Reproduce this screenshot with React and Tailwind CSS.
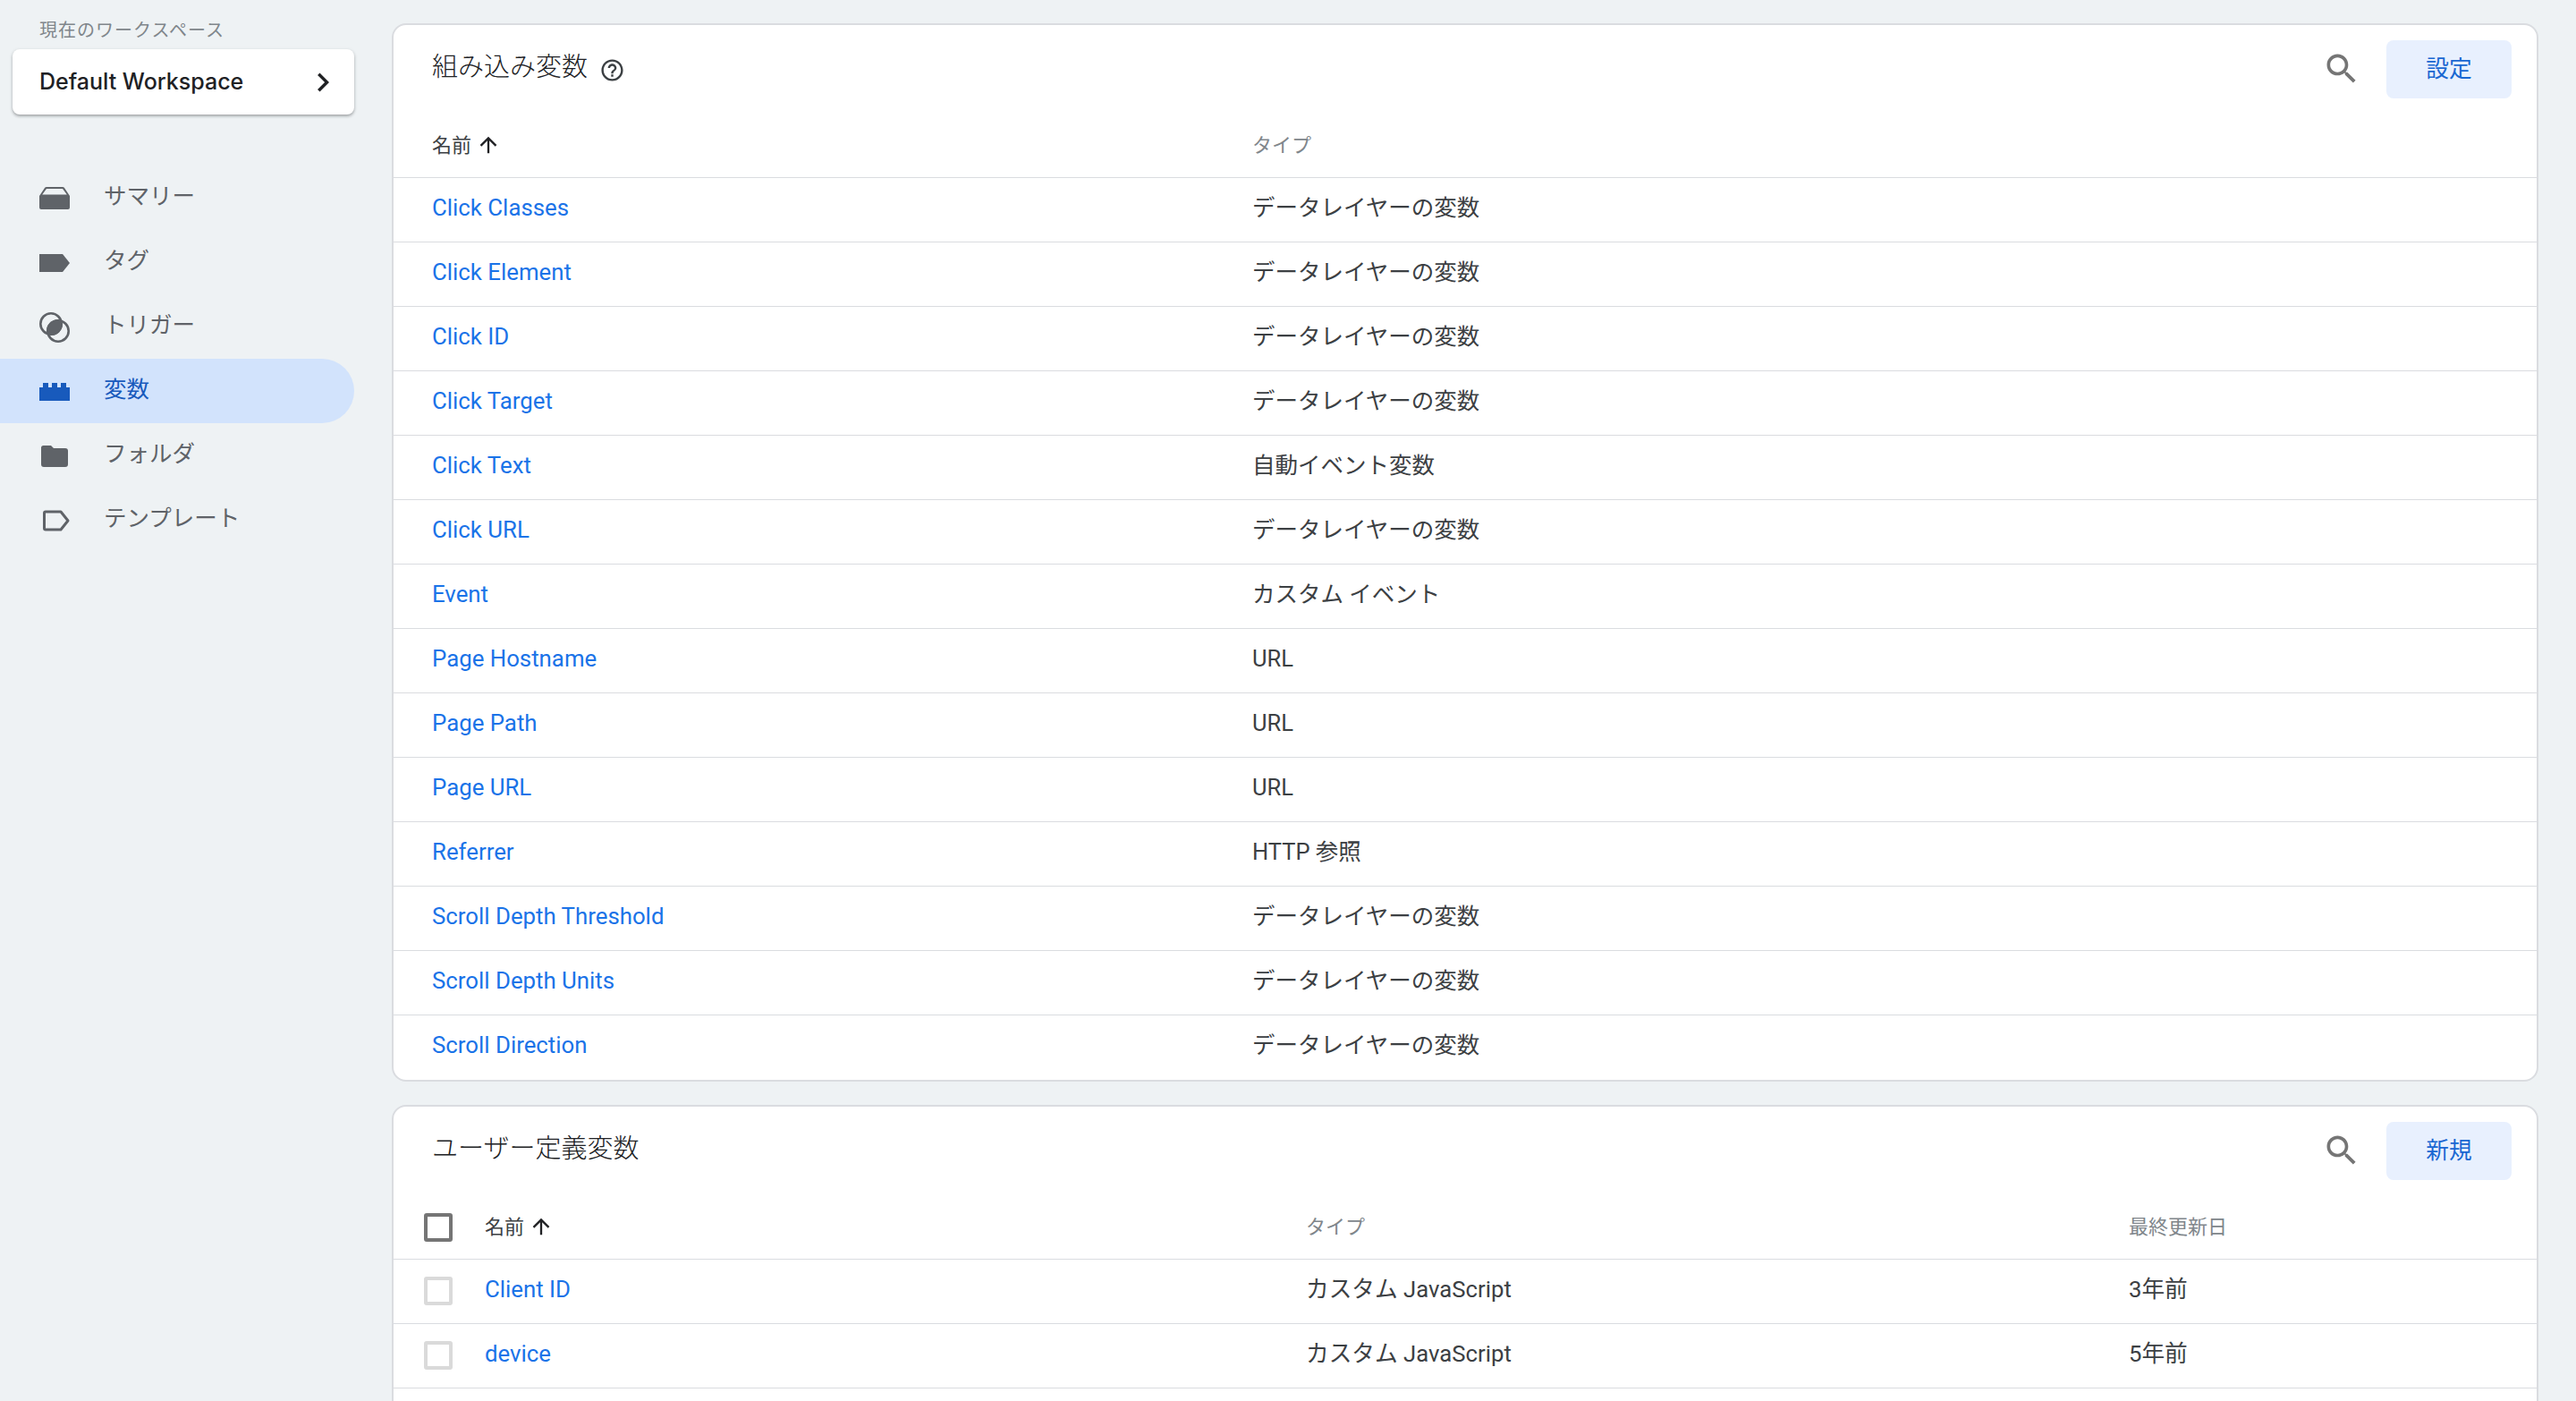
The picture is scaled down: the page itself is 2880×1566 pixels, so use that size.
const searchPath = "M15.5 14h-.79l-.28-.27C15.41 12.59 16 11.11 16 9.5 16 5.91 13.09 3 9.5 3S3 5.91 3 9.5 5.91 16 9.5 16c1.61 0 3.09-.59 4.23-1.57l.27.28v.79l5 4.99L20.49 19l-4.99-5zm-6 0C7.01 14 5 11.99 5 9.5S7.01 5 9.5 5 14 7.01 14 9.5 11.99 14 9.5 14z";
const helpPath = "M11 18h2v-2h-2v2zm1-16C6.48 2 2 6.48 2 12s4.48 10 10 10 10-4.48 10-10S17.52 2 12 2zm0 18c-4.41 0-8-3.59-8-8s3.59-8 8-8 8 3.59 8 8-3.59 8-8 8zm0-14c-2.21 0-4 1.79-4 4h2c0-1.1.9-2 2-2s2 .9 2 2c0 2-3 1.75-3 5h2c0-2.25 3-2.5 3-5 0-2.21-1.79-4-4-4z";
const arrowPath = "M4 12l1.41 1.41L11 7.83V20h2V7.83l5.58 5.59L20 12l-8-8-8 8z";
const chevronPath = "M10 6L8.59 7.41 13.17 12l-4.58 4.59L10 18l6-6z";

const DL = "データレイヤーの変数";

const builtIn = [
    ["Click Classes", DL],
    ["Click Element", DL],
    ["Click ID", DL],
    ["Click Target", DL],
    ["Click Text", "自動イベント変数"],
    ["Click URL", DL],
    ["Event", "カスタム イベント"],
    ["Page Hostname", "URL"],
    ["Page Path", "URL"],
    ["Page URL", "URL"],
    ["Referrer", "HTTP 参照"],
    ["Scroll Depth Threshold", DL],
    ["Scroll Depth Units", DL],
    ["Scroll Direction", DL],
];

const userDefined = [
    ["Client ID", "カスタム JavaScript", "3年前"],
    ["device", "カスタム JavaScript", "5年前"],
];

// nav icons are drawn on a 34x34 box, same as the originals
const SummaryIcon = () => (
    <svg width="34" height="34" viewBox="0 0 34 34" fill="#5f6368">
        <path d="M0 14 L6 5 Q6.6 4 8 4 H26 Q27.4 4 28 5 L34 14 V27 Q34 29 32 29 H2 Q0 29 0 27 Z M3.2 12.5 H30.8 L26 6 H8 Z" fillRule="evenodd" />
    </svg>
);
const TagIcon = () => (
    <svg width="34" height="34" viewBox="0 0 34 34" fill="#5f6368">
        <path d="M0 7 H26 L34 17 L26 27 H0 Z" />
    </svg>
);
const TriggerIcon = () => (
    <svg width="34" height="34" viewBox="0 0 34 34">
        <circle cx="13" cy="13" r="11.7" fill="none" stroke="#5f6368" strokeWidth="2.6" />
        <circle cx="21" cy="21" r="11.7" fill="none" stroke="#5f6368" strokeWidth="2.6" />
        <path d="M24.7 9.3 A11.7 11.7 0 0 1 9.3 24.7 A11.7 11.7 0 0 1 24.7 9.3 Z" fill="#5f6368" />
    </svg>
);
const VariableIcon = () => (
    <svg width="34" height="34" viewBox="0 0 34 34" fill="#185abc">
        <path d="M0 12 H4 V7 H10 V12 H14 V7 H20 V12 H24 V7 H30 V12 H34 V27 H0 Z" />
    </svg>
);
const FolderIcon = () => (
    <svg width="34" height="34" viewBox="0 0 34 34" fill="#5f6368">
        <path d="M4.5 5 H13 L16 8 H29 Q32 8 32 11 V26 Q32 29 29 29 H5 Q2 29 2 26 V7.5 Q2 5 4.5 5 Z" />
    </svg>
);
const TemplateIcon = () => (
    <svg width="34" height="34" viewBox="0 0 34 34" fill="none" stroke="#5f6368" strokeWidth="3" strokeLinejoin="round">
        <path d="M7 7 Q5.5 7 5.5 8.5 V25.5 Q5.5 27 7 27 H24 L32 17 L24 7 Z" />
    </svg>
);

const navItems = [
    { label: "サマリー", icon: <SummaryIcon /> },
    { label: "タグ", icon: <TagIcon /> },
    { label: "トリガー", icon: <TriggerIcon /> },
    { label: "変数", icon: <VariableIcon />, active: true },
    { label: "フォルダ", icon: <FolderIcon /> },
    { label: "テンプレート", icon: <TemplateIcon /> },
];

const Sidebar = () => (
    <div className="w-[438px] shrink-0 pr-[42px]">
        <div className="pl-[44px] pt-[23px] text-[20px] leading-[22px] tracking-[1px] text-[#80868b]">現在のワークスペース</div>
        <div className="mt-[10px] ml-[14px] h-[73px] flex items-center justify-between pl-[30px] pr-[14px] bg-white rounded-[8px] shadow-[0_2px_3px_rgba(60,64,67,0.35),0_1px_4px_rgba(60,64,67,0.12)]">
            <span className="text-[25px] font-medium text-[#202124] font-['Inter',sans-serif]">Default Workspace</span>
            <svg width="42" height="42" viewBox="0 0 24 24" fill="#202124"><path d={chevronPath} /></svg>
        </div>
        <div className="mt-[57px] flex flex-col">
            {navItems.map((v) => (
                <div key={v.label} className={"h-[72px] flex items-center pl-[44px] rounded-r-full " + (v.active ? "bg-[#d2e3fc] text-[#185abc]" : "text-[#5f6368]")}>
                    <span className="w-[34px] h-[34px] mt-[2px]">{v.icon}</span>
                    <span className="ml-[38px] mb-[3px] text-[25.5px]">{v.label}</span>
                </div>
            ))}
        </div>
    </div>
);

const CardHeader = ({ title, button, help }) => (
    <div className="flex items-start justify-between pl-[43px] pr-[28px] pt-[17px]">
        <div className="flex items-center h-[62px]">
            <span className="text-[29px] font-light text-[#202124]">{title}</span>
            {help && (
                <svg className="ml-[13px] mt-[5px]" width="29" height="29" viewBox="0 0 24 24" fill="#3c4043"><path d={helpPath} /></svg>
            )}
        </div>
        <div className="flex items-start">
            <svg className="mt-[10px] mr-[28px]" width="44" height="44" viewBox="0 0 24 24" fill="#757575"><path d={searchPath} /></svg>
            <button className="w-[140px] h-[65px] rounded-[8px] bg-[#e8f0fe] text-[25.7px] text-[#1967d2]">{button}</button>
        </div>
    </div>
);

const SortHead = () => (
    <span className="flex items-center text-[22px] text-[#3c4043]">
        名前
        <svg className="ml-[5px] -mt-[3px]" width="28" height="28" viewBox="0 0 24 24" fill="#202124"><path d={arrowPath} /></svg>
    </span>
);

const Cell = ({ className, children }) => (
    <div className={"leading-[32px] " + className}>{children}</div>
);

const App = () => {
    return (
        <div className="w-[2880px] h-[1566px] overflow-hidden flex bg-[#eef2f4] font-['Roboto','Noto_Sans_CJK_JP',sans-serif]">
            <Sidebar />

            <div className="w-[2400px] pt-[26px] flex flex-col gap-[26px]">
                <div className="shrink-0 bg-white border-2 border-[#dadce0] rounded-[16px] overflow-hidden">
                    <CardHeader title="組み込み変数" button="設定" help />
                    <div className="h-[18px]" />
                    <div className="h-[71px] flex items-end pb-[19px] pl-[43px] border-b border-[#dadce0] leading-[32px]">
                        <div className="w-[917px]"><SortHead /></div>
                        <div className="text-[22px] text-[#80868b]">タイプ</div>
                    </div>
                    {builtIn.map((v, i) => (
                        <div key={v[0]} className={"h-[72px] flex items-center pb-[6px] pl-[43px] " + (i < builtIn.length - 1 ? "border-b border-[#dadce0]" : "")}>
                            <Cell className="w-[917px] text-[25.8px] text-[#1a73e8]">{v[0]}</Cell>
                            <Cell className="text-[25.5px] text-[#3c4043]">{v[1]}</Cell>
                        </div>
                    ))}
                </div>

                <div className="bg-white border-2 border-[#dadce0] rounded-[16px] overflow-hidden shrink-0">
                    <CardHeader title="ユーザー定義変数" button="新規" />
                    <div className="h-[18px]" />
                    <div className="h-[71px] flex items-end pb-[19px] pl-[34px] border-b border-[#dadce0] leading-[32px]">
                        <div className="w-[68px]">
                            <div className="w-[32px] h-[32px] rounded-[3px] border-[4px] border-[#757575]" />
                        </div>
                        <div className="w-[918px]"><SortHead /></div>
                        <div className="w-[920px] text-[22px] text-[#80868b]">タイプ</div>
                        <div className="text-[22px] text-[#80868b]">最終更新日</div>
                    </div>
                    {userDefined.map((v) => (
                        <div key={v[0]} className="h-[72px] flex items-center pb-[6px] pl-[34px] border-b border-[#dadce0]">
                            <div className="w-[68px]">
                                <div className="w-[32px] h-[32px] mt-[5px] rounded-[3px] border-[4px] border-[#dadada]" />
                            </div>
                            <Cell className="w-[918px] text-[25.8px] text-[#1a73e8]">{v[0]}</Cell>
                            <Cell className="w-[920px] text-[25.7px] text-[#3c4043]">{v[1]}</Cell>
                            <Cell className="text-[25.7px] text-[#3c4043]">{v[2]}</Cell>
                        </div>
                    ))}
                    <div className="h-[72px]" />
                </div>
            </div>
        </div>
    );
};

export default App;
